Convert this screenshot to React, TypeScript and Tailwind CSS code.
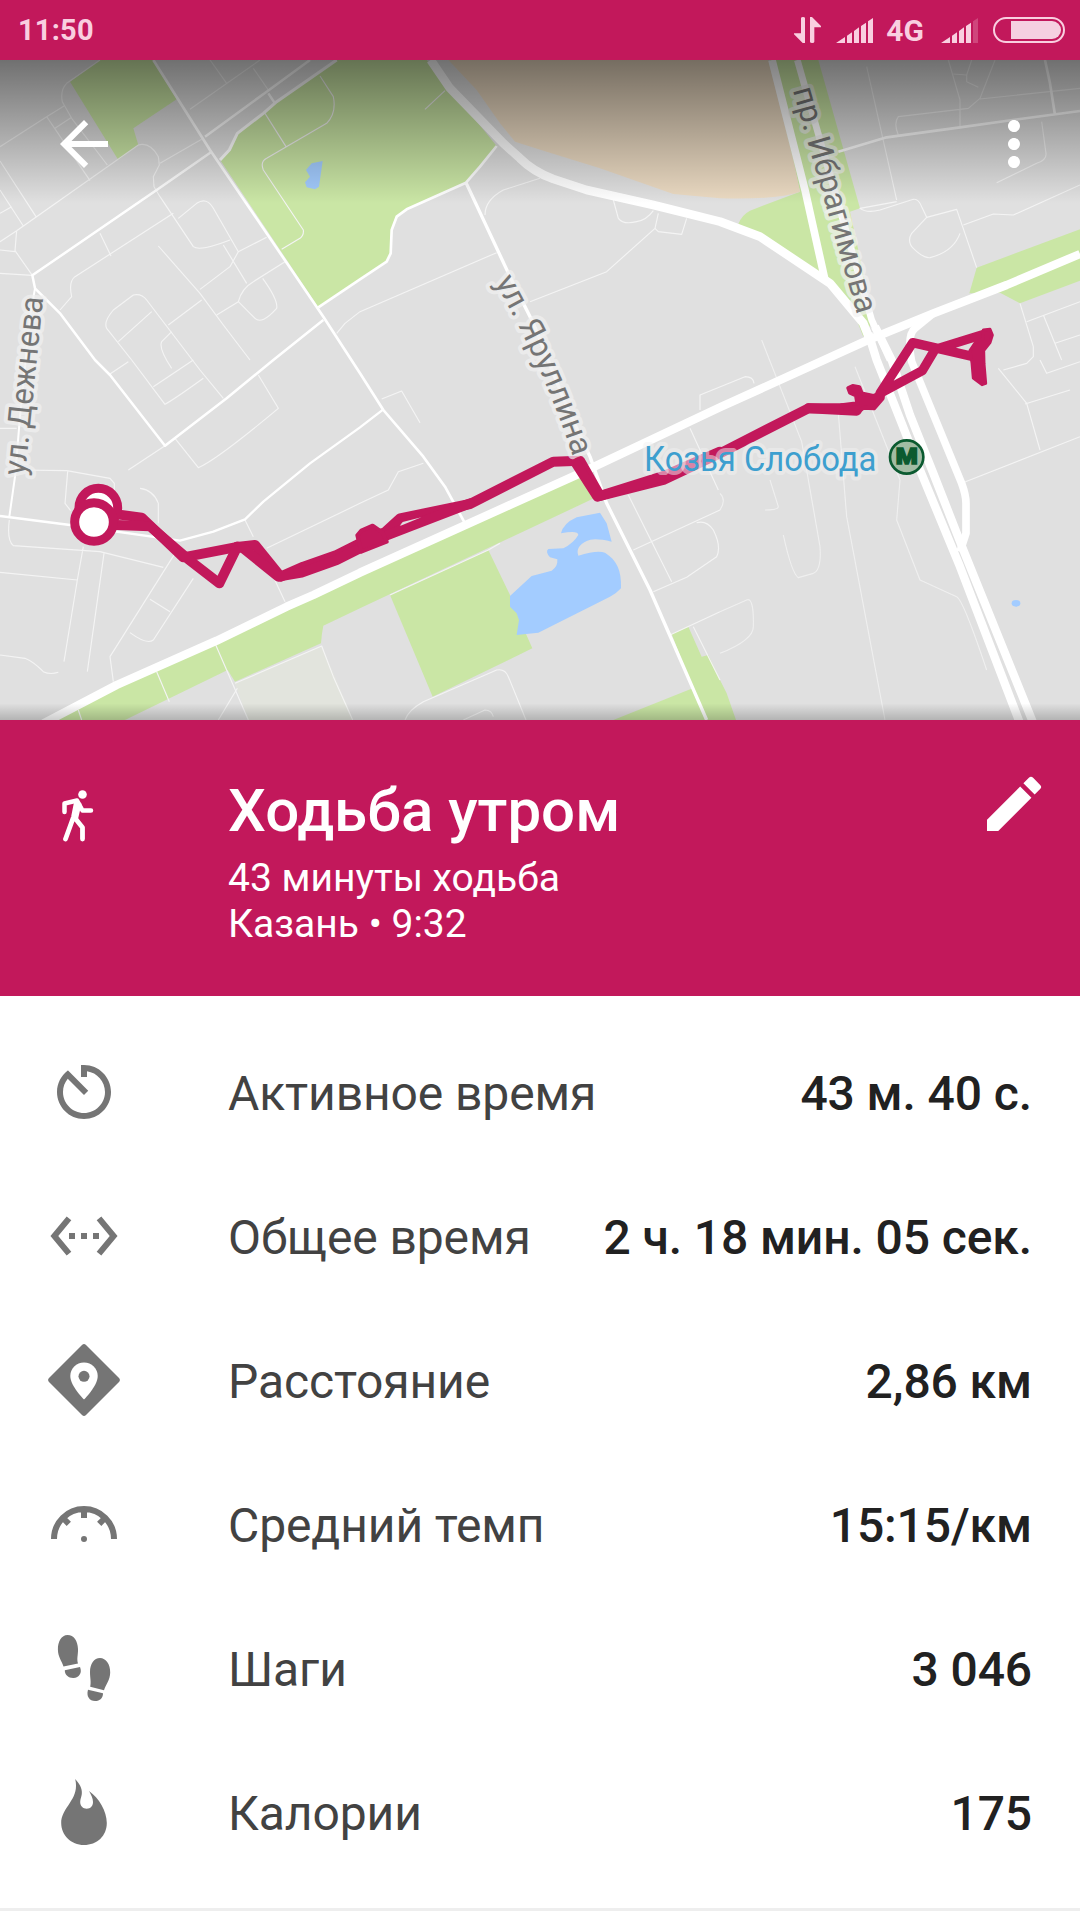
import React from 'react';
import { MdArrowBack, MdMoreVert, MdEdit, MdSettingsEthernet } from 'react-icons/md';

const Signal = ({ dim = false }: { dim?: boolean }) => (
  <svg viewBox="0 0 111 75" className="h-[25px] w-[37px]" fill="#f9cfe0">
    <path d="M0 75L27 57V75zM33 75V53L48 43V75zM54 75V39L69 28V75zM75 75V24L90 14V75z" />
    <path d="M96 75V10L111 0V75z" opacity={dim ? 0.25 : 1} />
  </svg>
);

const StatusBar: React.FC = () => (
  <div className="flex h-[60px] shrink-0 items-center justify-between bg-[#c2185b] pl-[18px] pr-[15px] text-[29px] font-bold text-[#f9cfe0]">
    <span className="pt-[2px] tracking-[0.2px]">11:50</span>
    <div className="flex items-center">
      <svg viewBox="0 0 81 78" className="mr-[15px] h-[26px] w-[27px]" fill="#f9cfe0">
        <path d="M21 4Q21 0 27 0Q33 0 33 4V78H26L0 52V49H21zM48 0H54L81 27V31H61V74Q61 78 54.500 78Q48 78 48 74z" />
      </svg>
      <Signal />
      <span className="ml-[13px] mr-[17px] text-[30px]">4G</span>
      <Signal dim />
      <div className="ml-[15px] flex h-[26px] w-[72px] justify-end rounded-full border-2 border-[#f9cfe0] p-[2px]">
        <div className="w-[50px] rounded-r-full bg-[#f5d0e0]" />
      </div>
    </div>
  </div>
);

const RouteMap: React.FC = () => (
  <svg viewBox="0 180 3240 1980" className="block h-[660px] w-[1080px]" fill="none">
    <defs>
      <linearGradient id="topShade" x1="0" y1="0" x2="0" y2="1">
        <stop offset="0" stopColor="#000" stopOpacity="0.5" />
        <stop offset="1" stopColor="#000" stopOpacity="0" />
      </linearGradient>
      <linearGradient id="bottomShade" x1="0" y1="0" x2="0" y2="1">
        <stop offset="0" stopColor="#000" stopOpacity="0" />
        <stop offset="1" stopColor="#000" stopOpacity="0.2" />
      </linearGradient>
      <path id="yarullina" d="M1484 846Q1630 1100 1720 1374" />
      <path id="ibragimova" d="M2378 270L2574 954" />
      <path id="dezhneva" d="M75 1428L130 888" />
    </defs>
    <rect y="180" width="3240" height="1980" fill="#e0e0e0" />

    {/* Parks */}
    <g fill="#cae6a5">
      <path d="M300 180L210 245L355 480L415 435L400 385L530 298L458 180z" />
      <path d="M1010 180L830 305L710 400L690 450L662 482L955 922L1080 838L1160 785L1172 760L1175 690L1190 650L1220 628L1398 548L1440 500L1490 438L1280 180z" />
      <path d="M2310 180H2455L2580 625L2550 635L2620 960L2590 1010L2570 960L2510 860L2460 830L2360 770L2280 710L2215 672Q2225 645 2250 632L2400 575z" />
      <path d="M3240 688L2930 803L2908 880L3000 878L3060 910L3240 842z" />
      <path d="M150 2160L350 2055L650 1925L1080 1720L1740 1425L1782 1495L1080 1825L970 1877Q965 1900 963 1930L705 2045L683 2010L375 2160z" />
      <path d="M1170 1785L1465 1650L1530 1785L1555 1850L1597 1945L1298 2090z" />
      <path d="M1840 2160L2078 2065L2015 1902L2065 1880L2105 1970L2125 1965L2160 2040L2180 2080L2208 2160z" />
    </g>
    <path d="M705 2050L965 1938L1060 2160H745z" fill="#e2e4dd" />
    <path d="M1345 180L1430 270L1500 370L1545 425L1640 455L1800 505L2020 582L2160 595Q2330 600 2400 575L2380 480L2305 180z" fill="#ebdac2" />

    {/* Water */}
    <g fill="#a3ccff">
      <path d="M968 483L935 490L918 510L930 530L915 547L920 562L945 568L957 560z" />
      <path d="M1800 1538L1820 1570L1835 1625Q1780 1612 1760 1623Q1725 1640 1735 1667Q1790 1650 1815 1658C1850 1680 1865 1710 1863 1765Q1850 1780 1830 1790L1615 1898L1550 1905L1557 1860L1550 1840L1530 1820V1788L1595 1728L1655 1712Q1674 1700 1672 1678L1650 1672Q1635 1655 1645 1647L1690 1645Q1720 1630 1735 1605Q1735 1590 1683 1600Q1690 1570 1730 1552z" />
      <ellipse cx="3048" cy="1810" rx="13" ry="10" />
    </g>

    {/* Side streets */}
    <g stroke="#f4f4f4" strokeWidth="3.400" strokeLinejoin="round">
      <path d="M300 180L200 250Q180 270 187 305L215 355L322 495M0 440L140 350L192 318M140 350L270 542M165 385L215 352" />
      <path d="M0 725L50 692L415 435Q450 425 475 470L478 495L460 530L462 560L480 590L580 740Q600 755 690 720M50 692L45 752L97 826M0 750L45 755M0 820L97 826M0 483L108 650M0 570L70 678M0 640L35 620" />
      <path d="M480 490L605 418M570 328L780 180M630 180L680 250M760 205L805 270M795 340L858 440M960 228L1000 290Q1010 340 980 370L800 475Q780 485 790 510L910 690Q912 705 900 715L845 748" />
      <path d="M535 655L590 610Q620 590 640 625L715 755L800 712M520 640L225 830Q205 845 215 890L180 930M300 700L333 768M670 735L740 850M715 755L690 800L600 868M855 785L760 845Q725 865 715 905L650 945M715 905L765 955Q785 975 830 925Q835 900 788 835" />
      <path d="M475 738L600 880L670 975L750 1080M605 900L505 975M395 1080L320 985Q310 965 340 930L400 885Q425 880 440 900L600 1110L670 1195M455 935L355 1025M515 995L485 1025Q475 1045 515 1105" />
      <path d="M395 1080L495 1213Q520 1200 610 1135M460 1160L580 1080M330 1122L385 1085M525 1315L595 1403Q650 1380 835 1225L775 1125M385 1410L495 1337M1010 1000L1035 970L1080 935L1490 758" />
      <path d="M0 1285H50M50 1410L200 1412L330 1435L343 1450V1480M203 1415L195 1510L212 1532M28 1560Q20 1620 40 1637L300 1655L490 1702M250 1640L232 1740L192 1985M312 1660L262 2015M0 1717L232 1740M0 1965L75 1975Q100 1985 130 2015Q150 2025 175 2017" />
      <path d="M420 1465Q460 1470 475 1510V1570M525 1660L330 1970L340 2045M450 1798L510 1835M580 1735L460 1920Q440 1935 390 1898M735 1560L760 1610M800 1645L1080 1510L1165 1470L1195 1415L1270 1390M820 1730L855 1805M645 1930L745 2160M470 2015L508 2105M235 2130L245 2160M712 2065L655 2160M705 2050L965 1938L1000 2030L1058 2160" />
      <path d="M1145 1197L1205 1173L1260 1268M1170 1785L1465 1650L1500 1630M1215 2160Q1225 2130 1270 2105L1490 2010Q1515 2005 1525 2030L1578 2160M1390 2160L1455 2130Q1475 2130 1480 2150" />
      <path d="M1885 1485L2015 1745M1900 1650L2160 1530M1960 1775L2060 1732L2150 1670Q2165 1640 2140 1590Q2120 1560 2090 1568M2010 1905L2160 1835M2080 1880L2160 2040M2070 1285L2155 1470M2100 1230V1185L2235 1130Q2260 1130 2262 1150" />
      <path d="M1275 328L1335 272M1455 645Q1455 600 1510 570L1620 535M1840 600L1855 655Q1870 675 1910 665Q1940 660 1960 632M1975 640L1965 685L1975 695L2045 703L2060 655M1965 685L1820 815L1590 905" />
      <path d="M2600 200L2690 600M2690 605L2580 625Q2600 640 2640 630L2740 598Q2755 595 2765 620L2780 652L2870 628L2930 803M2780 652L2735 700Q2720 725 2740 745Q2770 775 2790 773Q2860 755 2880 700M2890 675L2980 642L3040 645L3240 555M2845 180L2880 300V378M2695 405Q2680 370 2695 350L2905 325L2940 295L2985 180M2860 222L2900 225L2915 180M2900 225V245L2935 262M2940 297L3240 265M3125 365L3138 460Q3140 480 3110 490L2990 548" />
      <path d="M3060 910L3100 1040V1070L3080 1090L3010 1110M2995 1105L3080 1210L3120 1350M3080 965L3240 905M3130 945L3185 1080M3165 1030L3240 1005M2885 1450L3240 1310M3075 1212L3210 1170M3120 1080L3140 1120L3240 1085" />
      <path d="M2285 1020L2405 1325L2460 1640Q2465 1710 2440 1720L2395 1733Q2375 1720 2350 1605M2515 1240L2540 1550L2655 2160M2565 1100L2700 1440L2690 1560L2760 1740L2870 1790Q2890 1800 2960 2010M2310 1440L2335 1520Q2335 1530 2295 1530M2160 1835L2240 1800Q2262 1790 2260 1880Q2260 1920 2160 1960M2160 1480Q2180 1500 2160 1530" strokeOpacity="0.75" />
    </g>

    {/* Main streets */}
    <g stroke="#fff" strokeLinejoin="round">
      <path d="M460 180L630 450L970 950L1080 1120L1150 1230L1270 1370L1335 1460L1395 1570" strokeWidth="8" />
      <path d="M1010 180L830 305L790 340L712 400L688 450L660 480" strokeWidth="9" />
      <path d="M930 180L800 275L615 410M805 280L825 310M635 455L470 570L97 826L105 865L180 940L285 1080L330 1125L495 1337L680 1195L820 1080L970 960" strokeWidth="7.500" />
      <path d="M955 922L1080 838L1160 785L1172 760L1175 690L1190 650L1220 628L1398 548L1440 500L1490 438" strokeWidth="8" />
      <path d="M1398 548L1495 755L1530 830L1600 970L1700 1220L1770 1370L1820 1510L1950 1770L2120 2160" strokeWidth="10" />
      <path d="M0 1548L210 1575L540 1622L640 1595L735 1558L790 1505L930 1390L1080 1282L1150 1228" strokeWidth="7" />
      <path d="M28 1550L45 1430L60 1250L90 950L105 865" strokeWidth="6" />
      <path d="M2515 455L2660 412L2880 382L3060 357L3240 333M3135 180L3150 250L3165 345" strokeWidth="8" />
      <path d="M130 2170L350 2055L650 1922L860 1820L940 1785L1080 1718L1740 1420L2160 1222L2600 1022L2800 940L3020 855L3240 762" strokeWidth="25" />
      <path d="M1292 180L1350 265L1510 430L1560 475Q1600 515 1660 537L1760 570L1960 615L2160 665L2280 710L2490 850L2590 970L2610 1020" strokeWidth="26" />
      <path d="M2316 180L2415 570L2475 840" strokeWidth="23" />
      <path d="M2392 180L2460 420L2615 960L2670 1080" strokeWidth="20" />
      <path d="M2605 1000L2630 1080L2705 1270L2760 1410L2880 1700L3060 2170" strokeWidth="25" />
      <path d="M2625 980L2675 1080L2730 1245L2800 1420L2890 1650L3100 2170" strokeWidth="25" />
      <path d="M2800 940L2745 985Q2720 1005 2735 1085L2885 1450Q2898 1485 2898 1510V1600L2880 1655" strokeWidth="23" />
    </g>

    {/* Walked track */}
    <g stroke="#c2185b" strokeLinejoin="round" strokeLinecap="round">
      <path d="M330 1540L425 1553L550 1672L705 1642L765 1635L842 1730L910 1700L1010 1665L1080 1630L1145 1600" strokeWidth="30" />
      <path d="M330 1574L450 1579L565 1678L658 1750L712 1640L730 1645L835 1730L905 1718L1010 1680L1080 1645" strokeWidth="30" />
      <path d="M1140 1610L1200 1555L1410 1512L1660 1385L1740 1382L1800 1488L1990 1440L2160 1360L2425 1225H2570" strokeWidth="30" />
      <path d="M1145 1612L1240 1575L1410 1510M1728 1390L1792 1490L1990 1428L2160 1355" strokeWidth="30" />
      <path d="M2425 1225L2570 1232" strokeWidth="30" />
      <path d="M2640 1180L2738 1028L2920 1070M2640 1180L2767 1112L2805 1048L2960 1000" strokeWidth="28" />
      <path d="M1072 1606L1084 1592L1118 1577L1148 1598L1160 1625L1084 1655zM2545 1164L2558 1158L2578 1162L2585 1180L2620 1188L2650 1175L2648 1195L2622 1225L2590 1223L2576 1235L2525 1238V1216L2572 1210L2568 1186L2550 1178z" fill="#c2185b" strokeWidth="12" />
      <path d="M2950 990L2970 988L2977 1005L2970 1028L2951 1052L2952 1092L2957 1150L2946 1154L2920 1134L2916 1088L2910 1052L2926 1028L2950 1015z" fill="#c2185b" strokeWidth="9" />
    </g>
    <path d="M1200 1578L1208 1566L1264 1552z" fill="#e0e0e0" />
    <g stroke="#c2185b" strokeWidth="27" fill="#fff">
      <circle cx="295" cy="1523" r="58" />
      <circle cx="282" cy="1566" r="58" />
    </g>

    {/* Map labels */}
    <g fill="#757575" stroke="#f1f1f1" strokeOpacity="0.7" strokeWidth="24" strokeLinejoin="round" style={{ paintOrder: 'stroke' }} fontSize="96">
      <text>
        <textPath href="#dezhneva" textLength="538" lengthAdjust="spacingAndGlyphs">ул. Дежнева</textPath>
      </text>
      <text>
        <textPath href="#yarullina" textLength="576" lengthAdjust="spacingAndGlyphs">ул. Яруллина</textPath>
      </text>
      <text>
        <textPath href="#ibragimova" textLength="702" lengthAdjust="spacingAndGlyphs">пр. Ибрагимова</textPath>
      </text>
      <text x="1932" y="1412" fontSize="104" fill="#3d9fcf" strokeOpacity="0.5" textLength="697" lengthAdjust="spacingAndGlyphs">Козья Слобода</text>
    </g>
    <circle cx="2720" cy="1371" r="50" fill="#a2bca4" stroke="#0b5a30" strokeWidth="8" />
    <text x="2687" y="1393" fontSize="64" fontWeight="900" fill="#0b5a30" stroke="#0b5a30" strokeWidth="4" textLength="66" lengthAdjust="spacingAndGlyphs">М</text>

    <rect y="180" width="3240" height="430" fill="url(#topShade)" />
    <rect y="2110" width="3240" height="50" fill="url(#bottomShade)" />
  </svg>
);

const WalkIcon = () => (
  <svg viewBox="0 0 32 52" className="h-[52px] w-[32px]" fill="none" stroke="#fff" strokeLinecap="round" strokeLinejoin="round">
    <circle cx="20.500" cy="4.500" r="4.300" fill="#fff" stroke="none" />
    <path d="M2.500 22V13.500L15 10.500L20.500 20.500H29" strokeWidth="4.500" />
    <path d="M14.500 12L11.500 27L3.500 49M12.500 27.500L20.500 37.500V49" strokeWidth="4.800" />
    <path d="M14.500 11L18.500 14L15 29L11 27z" fill="#fff" strokeWidth="2" />
  </svg>
);

const ActiveTimeIcon = () => (
  <svg viewBox="0 0 24 24" className="h-[72px] w-[72px]" fill="currentColor">
    <path d="M11 3v4h2V5.080c3.390.490 6 3.390 6 6.920 0 3.870-3.130 7-7 7s-7-3.130-7-7c0-1.680.590-3.220 1.580-4.420L12 13l1.410-1.410-6.800-6.800v.020C4.420 6.450 3 9.050 3 12c0 4.970 4.020 9 9 9 4.970 0 9-4.030 9-9s-4.030-9-9-9h-1z" />
  </svg>
);

const DistanceIcon = () => (
  <svg viewBox="0 0 72 72" className="h-[72px] w-[72px]" fill="currentColor">
    <path d="M34 1Q36-.8 38 1L71 34Q72.800 36 71 38L38 71Q36 72.800 34 71L1 38Q-.8 36 1 34z" />
    <path d="M36 18.500C28.300 18.500 22.300 24.500 22.300 32C22.300 42 36 55.500 36 55.500S49.700 42 49.700 32C49.700 24.500 43.700 18.500 36 18.500z" fill="#fff" />
    <circle cx="36" cy="32.300" r="5.500" />
  </svg>
);

const PaceIcon = () => (
  <svg viewBox="0 0 72 72" className="h-[72px] w-[72px]" fill="none" stroke="currentColor" strokeWidth="6">
    <path d="M6 51A30 30 0 0 1 66 51M36 20V30M14.500 29.500L20.800 35.800M57.500 29.500L51.200 35.800" />
    <circle cx="36" cy="51" r="3" fill="currentColor" stroke="none" />
  </svg>
);

const StepsIcon = () => (
  <svg viewBox="0 0 72 72" className="h-[72px] w-[72px]" fill="currentColor">
    <path d="M19.500 3C13.500 3.200 9.700 9.500 9.900 17.500C10 25 13.500 28.500 15.500 34.500L30 31.500C28.500 26.500 30.200 23 30 17C29.700 9 26 3 19.500 3z" />
    <path d="M16.800 38.300L32 35C34.500 41 31 45.500 25.500 46C20.500 46.200 16.800 43 16.800 38.300z" />
    <path d="M52 26C46 26 42 32 42 40C42 46 43.300 50 42.200 54.800L56 58.200C58 52 62 48.500 62.200 40.500C62.300 32 58 26.200 52 26z" />
    <path d="M40 57.800L55 61.200C55 66 52 69 47 69C41.500 69 38 64.500 40 57.800z" />
  </svg>
);

const CaloriesIcon = () => (
  <svg viewBox="0 0 72 72" className="h-[72px] w-[72px]" fill="currentColor">
    <path d="M27 3C31 7 34.500 12 33.800 18C33.500 21 32.200 23 32.200 26C32.200 30 35 32.700 38.700 32.700C42.500 32.700 45 30 45 26C45 22 43 19 41 15C51 22 58.800 35 58.800 47C58.800 60 49 69 36 69C23 69 13.200 59 13.200 47C13.200 33 28 25 28 10C28 7 27.800 5 27 3z" />
  </svg>
);

const stats = [
  { icon: <ActiveTimeIcon />, label: 'Активное время', value: '43 м. 40 с.' },
  { icon: <MdSettingsEthernet size={72} />, label: 'Общее время', value: '2 ч. 18 мин. 05 сек.' },
  { icon: <DistanceIcon />, label: 'Расстояние', value: '2,86 км' },
  { icon: <PaceIcon />, label: 'Средний темп', value: '15:15/км' },
  { icon: <StepsIcon />, label: 'Шаги', value: '3 046' },
  { icon: <CaloriesIcon />, label: 'Калории', value: '175' },
];

export default function App() {
  return (
    <div className="flex h-[1920px] w-[1080px] flex-col overflow-hidden bg-white font-['Roboto',sans-serif]">
      <StatusBar />

      <section className="relative h-[660px] shrink-0">
        <RouteMap />
        <div className="absolute inset-x-0 top-0 flex justify-between px-[30px] pt-12 text-white">
          <button className="ml-[18px]">
            <MdArrowBack size={72} />
          </button>
          <button>
            <MdMoreVert size={72} />
          </button>
        </div>
      </section>

      {/* Activity header */}
      <header className="flex h-[276px] shrink-0 items-start bg-[#c2185b] text-white">
        <div className="w-[228px] pl-[62px] pt-[70px]">
          <WalkIcon />
        </div>
        <div className="flex-1 pt-[55px]">
          <h1 className="text-[60px] font-medium leading-[72px]">Ходьба утром</h1>
          <p className="mt-[8px] text-[39px] leading-[46px]">43 минуты ходьба</p>
          <p className="text-[39px] leading-[46px]">Казань • 9:32</p>
        </div>
        <button className="mr-[30px] mt-[48px]">
          <MdEdit size={72} />
        </button>
      </header>

      {/* Stats */}
      <ul className="shrink-0 border-b-[3px] border-[#eeeeee] py-6">
        {stats.map((s) => (
          <li key={s.label} className="flex h-36 items-center px-12 text-[48px] tracking-[-0.1px]">
            <span className="w-[180px] text-[#757575]">{s.icon}</span>
            <span className="flex-1 pt-1 text-[#424242]">{s.label}</span>
            <span className="pt-1 font-medium text-[#212121]">{s.value}</span>
          </li>
        ))}
      </ul>
    </div>
  );
}
